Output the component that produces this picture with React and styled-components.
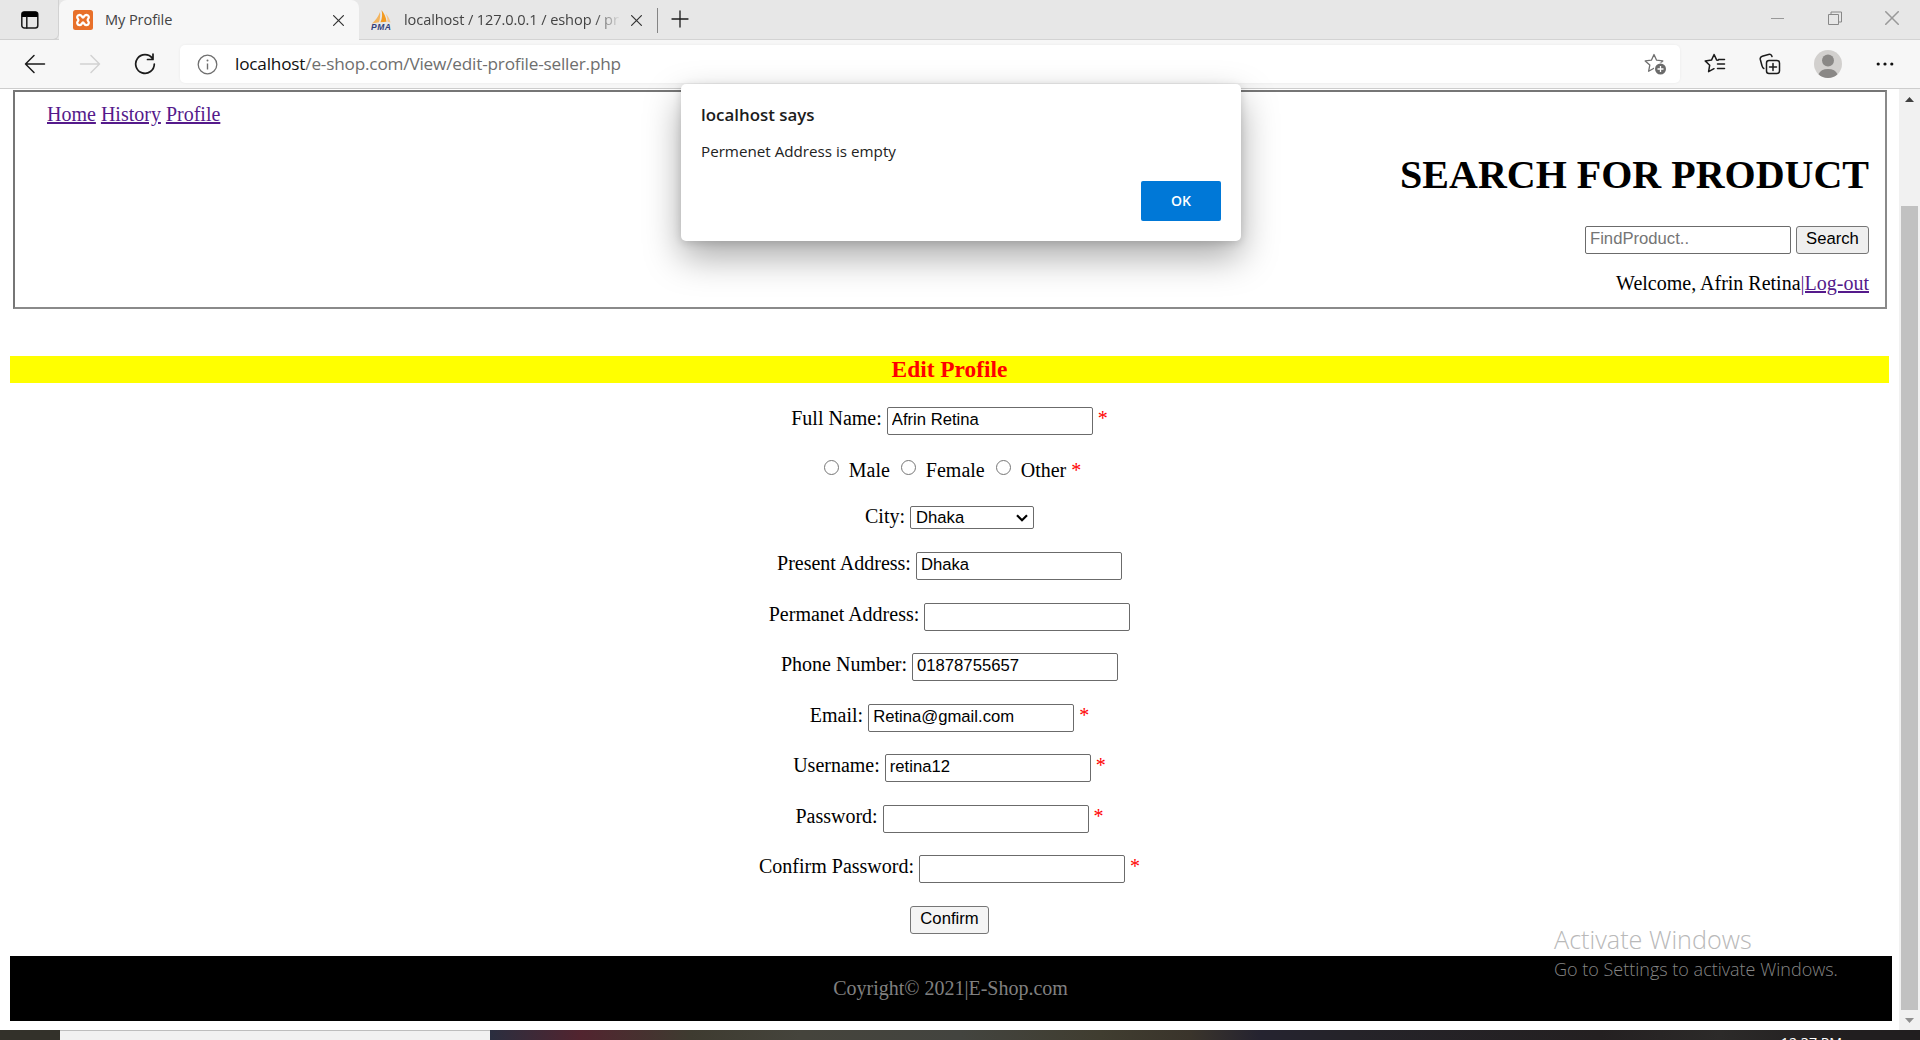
import React from "react";
import styled, { createGlobalStyle, css } from "styled-components";

const ui = css`
  font-family: "Open Sans", "Noto Sans", sans-serif;
`;

const GlobalStyle = createGlobalStyle`
  * { box-sizing: border-box; }
  body { margin: 0; background: #fff; overflow: hidden; }
  h1, h3, p { margin: 0; }
`;

const Screen = styled.div`
  position: relative;
  width: 1920px;
  height: 1040px;
  display: flex;
  flex-direction: column;
  overflow: hidden;
  background: #fff;
  color: #000;
  font-family: "Liberation Serif", "Times New Roman", serif;
  font-size: 20px;
  line-height: 23px;
`;

/* ---------- browser chrome ---------- */

const TabStrip = styled.div`
  display: flex;
  flex: none;
  height: 40px;
  background: #e7e7e7;
  box-shadow: inset 0 -1px 0 #d3d3d3;
`;

const TabActions = styled.div`
  width: 59px;
  height: 40px;
  padding: 10px 0 0 20px;
  border-bottom: 1px solid #d0d0d0;
  border-right: 1px solid #d2d2d2;
  border-radius: 0 0 6px 0;
`;

const Tab = styled.div`
  ${ui}
  display: flex;
  align-items: center;
  width: ${(p) => p.$width}px;
  height: 40px;
  padding: 0 15px 0 ${(p) => (p.$active ? 14 : 12)}px;
  border-radius: 8px 8px 0 0;
  background: ${(p) => (p.$active ? "#f7f7f7" : "transparent")};
  color: #444;
  svg { flex: none; }
`;

const TabTitle = styled.span`
  flex: 1;
  white-space: nowrap;
  padding-bottom: 2px;
  margin-left: ${(p) => (p.$fade ? 13 : 12)}px;
  margin-right: ${(p) => (p.$fade ? 10 : 0)}px;
  font-size: 14.6px;
  line-height: 22px;
  letter-spacing: ${(p) => p.$spacing}px;
  ${(p) => p.$fade && css`mask-image: linear-gradient(to right, #000 88%, transparent);`}
`;

const TabDivider = styled.div`
  width: 1px;
  height: 25px;
  margin: 8px 13px 0 0;
  background: #858585;
`;

const NewTab = styled.div`
  padding-top: 10px;
`;

const WindowControls = styled.div`
  display: flex;
  margin-left: auto;
  padding: 11px 21px 0 0;
  gap: 43px;
`;

const Toolbar = styled.div`
  ${ui}
  display: flex;
  align-items: center;
  flex: none;
  height: 49px;
  padding: 0 0 0 24px;
  background: #f7f7f7;
  border-bottom: 1px solid #cdcdcd;
`;

const NavButtons = styled.div`
  display: flex;
  flex: none;
  gap: 33px;
  width: 156px;
`;

const AddressBar = styled.div`
  display: flex;
  align-items: center;
  flex: none;
  width: 1500px;
  height: 38px;
  padding: 0 13px 0 17px;
  border-radius: 5px;
  background: #fff;
  box-shadow: 0 0 3px rgba(0, 0, 0, 0.06);
`;

const Url = styled.span`
  flex: 1;
  margin-left: 17px;
  padding-bottom: 1px;
  color: #6e6e6e;
  font-size: 17.2px;
  letter-spacing: -0.19px;
  line-height: 24px;
  white-space: nowrap;
`;

const Host = styled.span`
  color: #101010;
`;

const ToolbarIcons = styled.div`
  display: flex;
  align-items: center;
  margin-left: 24px;
  height: 38px;
`;

const IconSlot = styled.div`
  display: flex;
  flex: none;
  justify-content: center;
  width: ${(p) => p.$width}px;
`;

/* ---------- web page ---------- */

const Viewport = styled.div`
  display: flex;
  flex: none;
  height: 941px;
`;

const Page = styled.main`
  width: 1899px;
  padding: 1px 10px 0;
`;

const Header = styled.fieldset`
  display: flex;
  justify-content: space-between;
  width: 1874px;
  height: 219px;
  margin: 0 0 0 3px;
  padding: 11px 16px 0 32px;
  border: 2px solid;
  border-color: #767676 #8a8a8a #8a8a8a #767676;
`;

const Link = styled.a`
  color: #551a8b;
  text-decoration: underline;
`;

const Links = styled.nav`
  display: flex;
  gap: 5px;
`;

const SearchArea = styled.div`
  display: flex;
  flex-direction: column;
  align-items: flex-end;
  padding-top: 49px;
`;

const Heading = styled.h1`
  font-size: 40px;
  line-height: 46px;
  white-space: nowrap;
`;

const SearchRow = styled.div`
  display: flex;
  gap: 5px;
  margin-top: 28px;
`;

const Field = styled.input`
  width: 206px;
  height: 28px;
  padding: 0 4px 2px;
  border: 1px solid #6b6b6b;
  border-radius: 2px;
  background: #fff;
  color: #000;
  font: 16.67px "Liberation Sans", Arial, sans-serif;
  outline: none;
  &::placeholder { color: #757575; }
`;

const Button = styled.button`
  width: ${(p) => p.$width}px;
  height: 28px;
  padding: 0 0 2px;
  border: 1px solid #767676;
  border-radius: 3px;
  background: ${(p) => (p.$light ? "#f4f4f4" : "#efefef")};
  color: #000;
  font: 16.67px "Liberation Sans", Arial, sans-serif;
`;

const Welcome = styled.p`
  margin-top: 18px;
`;

const Title = styled.h3`
  width: 1879px;
  height: 27px;
  margin: 47px 0 24px;
  background: #ff0;
  color: #f00;
  font-size: 23.4px;
  line-height: 27px;
  text-align: center;
`;

const Row = styled.div`
  display: flex;
  justify-content: center;
  align-items: baseline;
  gap: 5px;
  width: 1879px;
  height: ${(p) => p.$height || 50.5}px;
  white-space: nowrap;
`;

const Required = styled.span`
  color: #f00;
`;

const Choice = styled.label`
  display: flex;
  align-items: baseline;
  gap: 10px;
  margin-left: 6px;
`;

const Radio = styled.input`
  appearance: none;
  width: 15px;
  height: 15px;
  margin: 0;
  border: 1px solid #767676;
  border-radius: 50%;
  transform: translateY(-2px);
`;

const Select = styled.div`
  display: flex;
  align-items: center;
  justify-content: space-between;
  width: 124px;
  height: 23px;
  padding: 0 5px;
  border: 1px solid #6b6b6b;
  border-radius: 2px;
  font: 16.67px "Liberation Sans", Arial, sans-serif;
`;

const Footer = styled.footer`
  width: 1882px;
  height: 65px;
  background: #000;
  color: #808080;
  line-height: 65px;
  text-align: center;
  padding-right: 1px;
`;

const Scrollbar = styled.div`
  display: flex;
  flex-direction: column;
  align-items: center;
  width: 21px;
  background: #f1f1f1;
`;

const ScrollArrow = styled.div`
  display: flex;
  align-items: center;
  justify-content: center;
  height: 20px;
`;

const Thumb = styled.div`
  width: 17px;
  height: 804px;
  margin-top: 97px;
  background: #c1c1c1;
`;

/* ---------- overlays ---------- */

const Dialog = styled.div`
  ${ui}
  position: absolute;
  left: 681px;
  top: 84px;
  width: 560px;
  height: 157px;
  display: flex;
  flex-direction: column;
  padding: 19px 20px;
  border-radius: 5px;
  background: #fff;
  box-shadow: 0 16px 36px rgba(0, 0, 0, 0.34), 0 2px 8px rgba(0, 0, 0, 0.14);
`;

const DialogTitle = styled.strong`
  color: #1c1c1c;
  font-size: 16.9px;
  font-weight: 600;
  line-height: 24px;
`;

const DialogText = styled.p`
  margin-top: 13px;
  color: #222;
  font-size: 15.2px;
  line-height: 22px;
`;

const OkButton = styled.button`
  ${ui}
  align-self: flex-end;
  width: 80px;
  height: 40px;
  margin-top: 19px;
  padding: 0 0 2px;
  border: 0;
  border-radius: 2px;
  background: #0078d7;
  color: #fff;
  font-size: 14px;
  font-weight: 600;
`;

const Watermark = styled.div`
  ${ui}
  position: absolute;
  left: 1554px;
  top: 922px;
  display: flex;
  flex-direction: column;
  white-space: nowrap;
  font-weight: 300;
`;

const WatermarkTitle = styled.span`
  color: #b9b9b9;
  font-size: 25.2px;
  line-height: 34px;
`;

const WatermarkText = styled.span`
  color: #858585;
  font-size: 18px;
  line-height: 26px;
`;

const Taskbar = styled.div`
  ${ui}
  display: flex;
  flex: none;
  height: 10px;
  overflow: hidden;
  background: linear-gradient(to right, #33312a 0, #33312a 60px, #2a2e3f 490px, #52242f 580px, #3e3b30 690px, #45443c 800px, #43443f 960px, #403d30 1100px, #3a342b 1190px, #252330 1260px, #252329 1350px, #242021 1600px, #2c2a29 1720px, #211e1f 1850px);
`;

const TaskSearch = styled.div`
  width: 430px;
  margin-left: 60px;
  border-top: 1px solid #bdbdbd;
  background: #f1f1f1;
`;

const Clock = styled.span`
  margin: 3px 78px 0 auto;
  color: #fff;
  font-size: 14.2px;
  line-height: 20px;
`;

const line = { fill: "none", stroke: "#1b1b1b", strokeWidth: 1.5, strokeLinecap: "round", strokeLinejoin: "round" };
const STAR = "M10 1.5 L12.6 7.2 L18.8 7.9 L14.2 12.1 L15.4 18.3 L10 15.2 L4.6 18.3 L5.8 12.1 L1.2 7.9 L7.4 7.2 Z";

const TabActionsIcon = () => (
  <svg width="20" height="20" viewBox="0 0 20 20">
    <rect x="1.8" y="2" width="16" height="16" rx="2.5" {...line} />
    <path d="M1.800 7V4a2.500 2.500 0 0 1 2.500-2.500h11A2.500 2.500 0 0 1 17.800 4v3z" fill="#000" />
    <path d="M6.800 7v11" {...line} />
  </svg>
);

const XamppIcon = () => (
  <svg width="20" height="20" viewBox="0 0 20 20">
    <rect width="20" height="20" rx="2.500" fill="#e8702a" />
    <path d="M10 7.500C8.800 7.500 8.800 4.800 6.500 4.800A2.400 2.400 0 0 0 5 9Q5.800 10 5 11A2.400 2.400 0 0 0 6.500 15.200C8.800 15.200 8.800 12.500 10 12.500C11.200 12.500 11.200 15.200 13.500 15.200A2.400 2.400 0 0 0 15 11Q14.200 10 15 9A2.400 2.400 0 0 0 13.500 4.800C11.200 4.800 11.200 7.500 10 7.500Z" fill="none" stroke="#fff" strokeWidth="2.300" />
  </svg>
);

const PmaLabel = styled.text`
  font: italic bold 8.5px "Liberation Sans", Arial, sans-serif;
  fill: #333f7c;
`;

const PmaIcon = () => (
  <svg width="20" height="20" viewBox="0 0 20 20">
    <path d="M9 2C7.500 6 5 10 1 13.500l7-1.200C9 9 9.500 5 9 2z" fill="#f3b45e" />
    <path d="M10.500 0c1 4 .8 8.500-1 12.300l6-.6C15 7 13 3 10.500 0z" fill="#f39a1f" />
    <path d="M14.500 3.500c1.500 3 2 5.500 2 8.200l3 .8C19 9.500 17 6 14.500 3.500z" fill="#f7c58a" />
    <PmaLabel x="0" y="19.700" textLength="20">PMA</PmaLabel>
  </svg>
);

const CloseIcon = ({ size = 11, color = "#333" }) => (
  <svg width={size} height={size} viewBox="0 0 11 11">
    <path d="M.6.6l9.800 9.800M10.400.6L.6 10.400" {...line} stroke={color} strokeWidth="1.200" />
  </svg>
);

const FIELDS = [
  { label: "Present Address:", value: "Dhaka" },
  { label: "Permanet Address:", value: "" },
  { label: "Phone Number:", value: "01878755657" },
  { label: "Email:", value: "Retina@gmail.com", required: true },
  { label: "Username:", value: "retina12", required: true },
  { label: "Password:", value: "", required: true },
  { label: "Confirm Password:", value: "", required: true },
];

const FieldRow = ({ label, value, required, height }) => (
  <Row $height={height}>
    <span>{label}</span>
    <Field defaultValue={value} />
    {required && <Required>*</Required>}
  </Row>
);

export default function App() {
  return (
    <Screen>
      <GlobalStyle />
      <TabStrip>
        <TabActions><TabActionsIcon /></TabActions>
        <Tab $active $width={300}>
          <XamppIcon />
          <TabTitle $spacing={-0.1}>My Profile</TabTitle>
          <CloseIcon />
        </Tab>
        <Tab $width={298}>
          <PmaIcon />
          <TabTitle $fade $spacing={-0.1}>localhost / 127.0.0.1 / eshop / pr</TabTitle>
          <CloseIcon />
        </Tab>
        <TabDivider />
        <NewTab>
          <svg width="18" height="18" viewBox="0 0 18 18"><path d="M9 1v16M1 9h16" {...line} strokeWidth="1.300" /></svg>
        </NewTab>
        <WindowControls>
          <svg width="14" height="14" viewBox="0 0 14 14"><path d="M0 7.500h13" stroke="#999" fill="none" /></svg>
          <svg width="14" height="14" viewBox="0 0 14 14"><path d="M.5 3.500h10v10H.5zM3 3.500V1h10.500v10H11" stroke="#888" fill="none" /></svg>
          <CloseIcon size={14} color="#999" />
        </WindowControls>
      </TabStrip>

      <Toolbar>
        <NavButtons>
          <svg width="22" height="22" viewBox="0 0 22 22"><path d="M20.500 11H1.500M10 2.500L1.500 11l8.500 8.500" {...line} /></svg>
          <svg width="22" height="22" viewBox="0 0 22 22"><path d="M1.500 11h19M12 2.500l8.500 8.500-8.500 8.500" {...line} stroke="#d2d2d2" /></svg>
          <svg width="22" height="22" viewBox="0 0 22 22"><path d="M18.500 5.500A9.300 9.300 0 1 0 20.300 11M19 1v5.500h-5.500" {...line} strokeWidth="1.700" /></svg>
        </NavButtons>
        <AddressBar>
          <svg width="21" height="21" viewBox="0 0 21 21">
            <circle cx="10.500" cy="10.500" r="9.300" fill="none" stroke="#6f6f6f" strokeWidth="1.300" />
            <path d="M10.500 9.500v6" stroke="#6f6f6f" strokeWidth="1.400" /><circle cx="10.500" cy="6.500" r="1" fill="#6f6f6f" />
          </svg>
          <Url><Host>localhost</Host>/e-shop.com/View/edit-profile-seller.php</Url>
          <svg width="23" height="23" viewBox="0 0 23 23">
            <path d={STAR} {...line} stroke="#707070" strokeWidth="1.300" />
            <circle cx="16.500" cy="16" r="6.500" fill="#fff" />
            <circle cx="16.500" cy="16" r="5.500" fill="#6b6b6b" />
            <path d="M16.500 13v6M13.500 16h6" stroke="#fff" strokeWidth="1.300" />
          </svg>
        </AddressBar>
        <ToolbarIcons>
          <IconSlot $width={22}>
            <svg width="22" height="22" viewBox="0 0 22 22">
              <path d="M14 7.300L12.700 7.100 10.100 1.500 7.500 7.100 1.200 7.900 5.700 12.200 4.600 18.700 10 15.700" {...line} />
              <path d="M14.500 6.500h6M13.500 11h7M13.500 15.500h7" {...line} />
            </svg>
          </IconSlot>
          <IconSlot $width={88}>
            <svg width="22" height="22" viewBox="0 0 22 22">
              <rect x="7.500" y="7.500" width="13" height="13" rx="2.500" {...line} />
              <path d="M14 10.500v7M10.500 14h7M4.800 15.500C3.500 15 3.300 14 3 12.800L1.300 6.500C.9 4.800 1.500 3.700 3.200 3.200L9.500 1.500c1.800-.5 3 .1 3.500 2" {...line} />
            </svg>
          </IconSlot>
          <IconSlot $width={28}>
            <svg width="28" height="28" viewBox="0 0 28 28">
              <circle cx="14" cy="14" r="14" fill="#d2d0ce" />
              <circle cx="14" cy="10.500" r="6" fill="#8a8886" />
              <path d="M4.500 24.200a10 7.500 0 0 1 19 0 14 14 0 0 1-19 0z" fill="#8a8886" />
            </svg>
          </IconSlot>
          <IconSlot $width={86}>
            <svg width="18" height="6" viewBox="0 0 18 6"><g fill="#111"><circle cx="2.200" cy="3" r="1.600" /><circle cx="9" cy="3" r="1.600" /><circle cx="15.800" cy="3" r="1.600" /></g></svg>
          </IconSlot>
        </ToolbarIcons>
      </Toolbar>

      <Viewport>
        <Page>
          <Header>
            <Links><Link>Home</Link><Link>History</Link><Link>Profile</Link></Links>
            <SearchArea>
              <Heading>SEARCH FOR PRODUCT</Heading>
              <SearchRow>
                <Field placeholder="FindProduct.." />
                <Button $width={73}>Search</Button>
              </SearchRow>
              <Welcome>Welcome, Afrin Retina<Link>|Log-out</Link></Welcome>
            </SearchArea>
          </Header>
          <Title>Edit Profile</Title>
          <FieldRow label="Full Name:" value="Afrin Retina" required height={51.5} />
          <Row $height={46}>
            <Choice><Radio type="radio" name="gender" />Male</Choice>
            <Choice><Radio type="radio" name="gender" />Female</Choice>
            <Choice><Radio type="radio" name="gender" />Other</Choice>
            <Required>*</Required>
          </Row>
          <Row $height={47.5}>
            <span>City:</span>
            <Select>
              Dhaka
              <svg width="12" height="8" viewBox="0 0 12 8"><path d="M1 1.200l5 5 5-5" fill="none" stroke="#000" strokeWidth="2.200" /></svg>
            </Select>
          </Row>
          {FIELDS.map((f) => <FieldRow key={f.label} {...f} />)}
          <Row><Button $light $width={79}>Confirm</Button></Row>
          <Footer>Coyright© 2021|E-Shop.com</Footer>
        </Page>
        <Scrollbar>
          <ScrollArrow><svg width="9" height="5" viewBox="0 0 9 5"><path d="M0 5l4.500-5L9 5z" fill="#404040" /></svg></ScrollArrow>
          <Thumb />
          <ScrollArrow><svg width="9" height="5" viewBox="0 0 9 5"><path d="M0 0l4.500 5L9 0z" fill="#8f8f8f" /></svg></ScrollArrow>
        </Scrollbar>
      </Viewport>

      <Taskbar>
        <TaskSearch />
        <Clock>12:37 PM</Clock>
      </Taskbar>

      <Dialog>
        <DialogTitle>localhost says</DialogTitle>
        <DialogText>Permenet Address is empty</DialogText>
        <OkButton>OK</OkButton>
      </Dialog>
      <Watermark>
        <WatermarkTitle>Activate Windows</WatermarkTitle>
        <WatermarkText>Go to Settings to activate Windows.</WatermarkText>
      </Watermark>
    </Screen>
  );
}
